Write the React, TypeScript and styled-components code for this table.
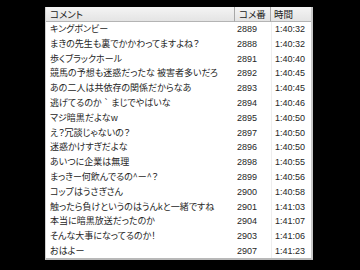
import { Fragment } from "react";
import styled, { createGlobalStyle } from "styled-components";

const GlobalStyle = createGlobalStyle`
  html, body {
    margin: 0;
    padding: 0;
    background: #000;
  }
  body {
    width: 360px;
    height: 270px;
    overflow: hidden;
  }
`;

const Screen = styled.div`
  width: 360px;
  height: 270px;
  background: #000;
  padding: 7px 0 0 45px;
  box-sizing: border-box;
`;

const ListView = styled.div`
  width: 268px;
  height: 253px;
  background: #fff;
  border-right: 2px solid #c8c8c8;
  border-bottom: 2px solid #b8b8b8;
  border-left: 1px solid #d0d0d0;
  box-sizing: border-box;
  overflow: hidden;
`;

const Grid = styled.div`
  display: grid;
  grid-template-columns: 189px 36px 40px;
`;

const HeaderCell = styled.div<{ $last?: boolean }>`
  height: 15px;
  box-sizing: border-box;
  background: linear-gradient(#f4f4f4, #e4e4e4);
  border-bottom: 1px solid #b4b4b4;
  border-right: ${(p) => (p.$last ? "none" : "1px solid #a8a8a8")};
  padding-left: ${(p) => (p.$last ? 3 : 4)}px;
  font-family: "Noto Sans CJK JP", sans-serif;
  font-size: 9.5px;
  font-feature-settings: "palt";
  line-height: 14px;
  color: #222;
  white-space: nowrap;
`;

const Cell = styled.div<{ $kind: "text" | "num" | "time" }>`
  height: 14.8px;
  box-sizing: border-box;
  white-space: nowrap;
  overflow: hidden;
  color: #262626;
  padding-left: ${(p) => (p.$kind === "text" ? 4 : p.$kind === "num" ? 2 : 3)}px;
  border-left: ${(p) => (p.$kind === "time" ? "1px solid #eeeeee" : "none")};
  font-family: ${(p) =>
    p.$kind === "text"
      ? `"Noto Sans CJK JP", sans-serif`
      : `"Liberation Sans", Arial, sans-serif`};
  font-size: ${(p) => (p.$kind === "text" ? 9 : 9)}px;
  font-feature-settings: "palt";
  line-height: 14.8px;
`;

const rows: [string, string, string][] = [
  ["キングボンビー", "2889", "1:40:32"],
  ["まきの先生も裏でかかわってますよね？", "2888", "1:40:32"],
  ["歩くブラックホール", "2891", "1:40:40"],
  ["競馬の予想も迷惑だったな  被害者多いだろ", "2892", "1:40:45"],
  ["あの二人は共依存の関係だからなあ", "2893", "1:40:45"],
  ["逃げてるのか ` まじでやばいな", "2894", "1:40:46"],
  ["マジ暗黒だよなw", "2895", "1:40:50"],
  ["え？冗談じゃないの？", "2897", "1:40:50"],
  ["迷惑かけすぎだよな", "2896", "1:40:50"],
  ["あいつに企業は無理", "2898", "1:40:55"],
  ["まっきー何飲んでるの^ー^？", "2899", "1:40:56"],
  ["コップはうさぎさん", "2900", "1:40:58"],
  ["触ったら負けというのはうんkと一緒ですね", "2901", "1:41:03"],
  ["本当に暗黒放送だったのか", "2904", "1:41:07"],
  ["そんな大事になってるのか！", "2903", "1:41:06"],
  ["おはよー", "2907", "1:41:23"],
];

export default function App() {
  return (
    <>
      <GlobalStyle />
      <Screen>
        <ListView>
          <Grid>
            <HeaderCell>コメント</HeaderCell>
            <HeaderCell>コメ番</HeaderCell>
            <HeaderCell $last>時間</HeaderCell>
            {rows.map(([text, no, time]) => (
              <Fragment key={no}>
                <Cell $kind="text">{text}</Cell>
                <Cell $kind="num">{no}</Cell>
                <Cell $kind="time">{time}</Cell>
              </Fragment>
            ))}
          </Grid>
        </ListView>
      </Screen>
    </>
  );
}
